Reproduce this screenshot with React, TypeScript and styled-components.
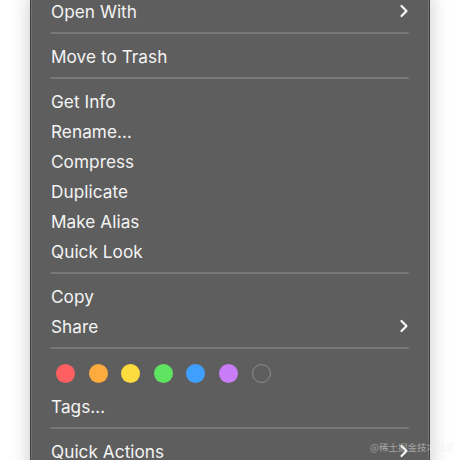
import React from "react";
import styled, { createGlobalStyle } from "styled-components";

const Global = createGlobalStyle`
  html, body { margin: 0; padding: 0; background: #ffffff; }
  body { width: 460px; height: 460px; overflow: hidden; font-family: Inter, "Liberation Sans", "Noto Sans CJK SC", sans-serif; }
`;

const Page = styled.div`
  position: relative;
  width: 460px;
  height: 460px;
  overflow: hidden;
  background: #ffffff;
`;

const Menu = styled.div`
  margin: -5px 0 0 30px;
  width: 400px;
  box-sizing: border-box;
  background: #5e5e5e;
  border: 1px solid #3f3f3f;
  box-shadow: inset 0 0 0 1px #727272, 0 0 18px rgba(0, 0, 0, 0.22);
  padding: 0 20px 20px 20px;
  display: flex;
  flex-direction: column;
`;

const Row = styled.div`
  height: 30px;
  display: flex;
  align-items: center;
  justify-content: space-between;
  color: #f4f4f4;
  font-size: 17.2px;
  letter-spacing: 0.05px;
`;

const Sep = styled.div`
  height: 2px;
  margin: 6px 0 7px -1px;
  background: #787878;
  border-radius: 1px;
`;

const Dots = styled.div`
  height: 35px;
  display: flex;
  align-items: center;
  gap: 13.6px;
  padding-left: 5px;
`;

const Dot = styled.span<{ $c?: string }>`
  width: 19px;
  height: 19px;
  border-radius: 50%;
  box-sizing: border-box;
  background: ${(p) => p.$c ?? "transparent"};
  border: ${(p) => (p.$c ? "none" : "1.5px solid #8c8c8c")};
`;

const Watermark = styled.div`
  position: absolute;
  right: 5px;
  bottom: 6px;
  font-size: 9.5px;
  color: rgba(235, 235, 235, 0.5);
  font-family: "Noto Sans CJK SC", sans-serif;
`;

const Chevron = () => (
  <svg width="10" height="14" viewBox="0 0 10 14">
    <path d="M2.5 2 L7.5 7 L2.5 12" fill="none" stroke="#f6f6f6" strokeWidth="2.2" strokeLinecap="round" strokeLinejoin="round" />
  </svg>
);

const Item = ({ label, sub }: { label: string; sub?: boolean }) => (
  <Row>
    <span>{label}</span>
    {sub && <Chevron />}
  </Row>
);

export default function App() {
  return (
    <Page>
      <Global />
      <Menu>
        <Item label="Open With" sub />
        <Sep />
        <Item label="Move to Trash" />
        <Sep />
        <Item label="Get Info" />
        <Item label="Rename…" />
        <Item label="Compress" />
        <Item label="Duplicate" />
        <Item label="Make Alias" />
        <Item label="Quick Look" />
        <Sep />
        <Item label="Copy" />
        <Item label="Share" sub />
        <Sep />
        <Dots>
          <Dot $c="#fe5f60" />
          <Dot $c="#feab3e" />
          <Dot $c="#fedb3e" />
          <Dot $c="#5fe462" />
          <Dot $c="#3f9ffd" />
          <Dot $c="#c87cf6" />
          <Dot />
        </Dots>
        <Item label="Tags…" />
        <Sep />
        <Item label="Quick Actions" sub />
      </Menu>
      <Watermark>@稀土掘金技术社区</Watermark>
    </Page>
  );
}
